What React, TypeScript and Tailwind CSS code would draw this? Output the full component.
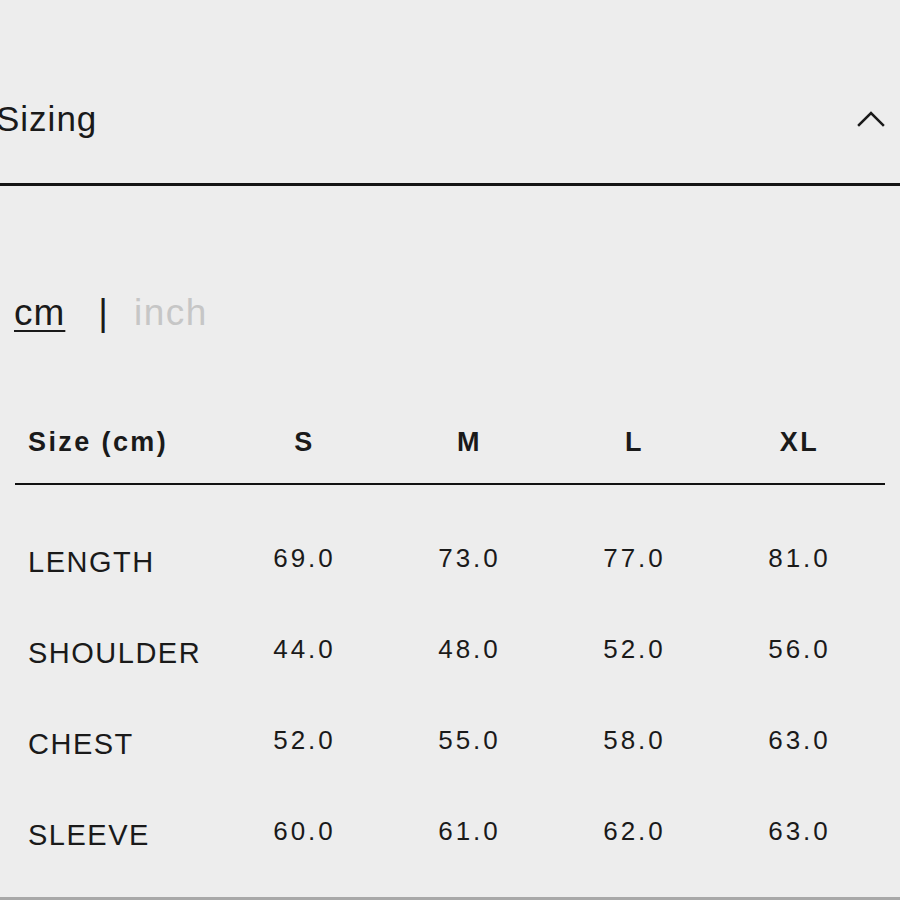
import React from "react";

const rows = [
  { label: "LENGTH", values: ["69.0", "73.0", "77.0", "81.0"] },
  { label: "SHOULDER", values: ["44.0", "48.0", "52.0", "56.0"] },
  { label: "CHEST", values: ["52.0", "55.0", "58.0", "63.0"] },
  { label: "SLEEVE", values: ["60.0", "61.0", "62.0", "63.0"] },
];

export default function App() {
  return (
    <div
      className="w-[900px] h-[900px] bg-[#ededed] text-[#1a1a1a] overflow-hidden flex flex-col border-b-[3px] border-[#a8a8a8]"
      style={{ fontFamily: '"Liberation Sans", Arial, sans-serif' }}
    >
      {/* Accordion header */}
      <div className="h-[186px] shrink-0 pt-[54px] border-b-[3px] border-[#151515] flex items-center justify-between pr-[15px]">
        <span className="ml-[-4px] text-[35px] leading-none tracking-[1px]">Sizing</span>
        <svg width="28" height="16" viewBox="0 0 28 16" fill="none">
          <polyline points="2,14 14,2 26,14" stroke="#1a1a1a" strokeWidth="2.5" strokeLinecap="square" />
        </svg>
      </div>

      {/* Unit toggle */}
      <div className="mt-[108px] pl-[14px] flex items-start text-[37px] leading-none">
        <span className="tracking-[1px] underline decoration-2 underline-offset-[5px]">cm</span>
        <span className="ml-[33px]">|</span>
        <span className="ml-[26px] tracking-[1.5px] text-[#c6c6c6]">inch</span>
      </div>

      {/* Table */}
      <div className="mt-[98px] mx-[15px] w-[870px]">
        <div className="grid grid-cols-[207px_165px_165px_165px_165px] pb-[27px] border-b-2 border-[#111111] text-[27px] leading-none font-bold tracking-[2.4px]">
          <span className="pl-[13px]">Size (cm)</span>
          <span className="text-center">S</span>
          <span className="text-center">M</span>
          <span className="text-center">L</span>
          <span className="text-center">XL</span>
        </div>
        {rows.map((r) => (
          <div key={r.label} className="grid grid-cols-[207px_165px_165px_165px_165px] items-start h-[91px] pt-[60px]">
            <span className="pl-[13px] mt-[3px] text-[29px] leading-none tracking-[1.5px]">{r.label}</span>
            {r.values.map((v, i) => (
              <span key={i} className="text-center text-[26px] leading-none tracking-[3px]">
                {v}
              </span>
            ))}
          </div>
        ))}
      </div>
    </div>
  );
}
